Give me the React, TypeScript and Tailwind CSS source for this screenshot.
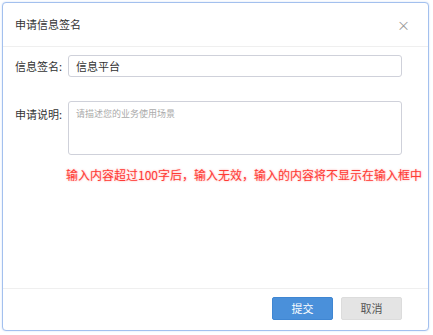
import React from 'react';

export default function App() {
  const [sign, setSign] = React.useState<string>('信息平台');
  const [desc, setDesc] = React.useState<string>('');

  return (
    <div className="w-[433px] h-[335px] bg-white p-[2px] font-['Noto_Sans_CJK_SC','Noto_Sans',sans-serif]">
      <div className="flex flex-col w-[427px] h-[329px] rounded-[4px] border border-[#a3c0ee] shadow-[0_0_2px_#c9dbf6] bg-white">
        {/* Header */}
        <div className="flex items-center justify-between h-[44px] pl-[12px] pr-[18px] border-b border-[#efefef]">
          <span className="text-[11px] text-[#333]">申请信息签名</span>
          <span className="text-[13px] leading-none text-[#999]">×</span>
        </div>

        {/* Body */}
        <div className="flex-1 flex flex-col pt-[8px] pl-[12px] pr-[26px]">
          <div className="flex items-center">
            <label className="w-[53px] shrink-0 text-[11px] text-[#333]">信息签名:</label>
            <input
              value={sign}
              onChange={(e) => setSign(e.target.value)}
              className="flex-1 h-[22px] px-[7px] rounded-[3px] border border-[#cfd1da] text-[11px] text-[#333] outline-none"
            />
          </div>
          <div className="flex items-start mt-[24px]">
            <label className="w-[53px] shrink-0 pt-[5px] text-[11px] text-[#333]">申请说明:</label>
            <textarea
              value={desc}
              maxLength={100}
              onChange={(e) => setDesc(e.target.value)}
              placeholder="请描述您的业务使用场景"
              className="flex-1 h-[54px] px-[7px] py-[5px] rounded-[3px] border border-[#cfd1da] text-[9px] text-[#333] placeholder:text-[#aaa] outline-none resize-none"
            />
          </div>
          <p className="mt-[12px] ml-[51px] whitespace-nowrap text-[12px] leading-[16px] text-[#ff3b35] [text-shadow:0_0_2px_rgba(255,90,90,0.6)]">
            输入内容超过100字后，输入无效，输入的内容将不显示在输入框中
          </p>
        </div>

        {/* Footer */}
        <div className="flex items-center justify-end gap-[8px] h-[42px] pb-[2px] pr-[26px] border-t border-[#efefef]">
          <button className="w-[61px] h-[23px] rounded-[2px] bg-[#4a90da] border border-[#3f86d2] text-[11px] text-white">
            提交
          </button>
          <button className="w-[61px] h-[23px] rounded-[2px] bg-[#e4e4e4] border border-[#dcdcdc] text-[11px] text-[#555]">
            取消
          </button>
        </div>
      </div>
    </div>
  );
}
